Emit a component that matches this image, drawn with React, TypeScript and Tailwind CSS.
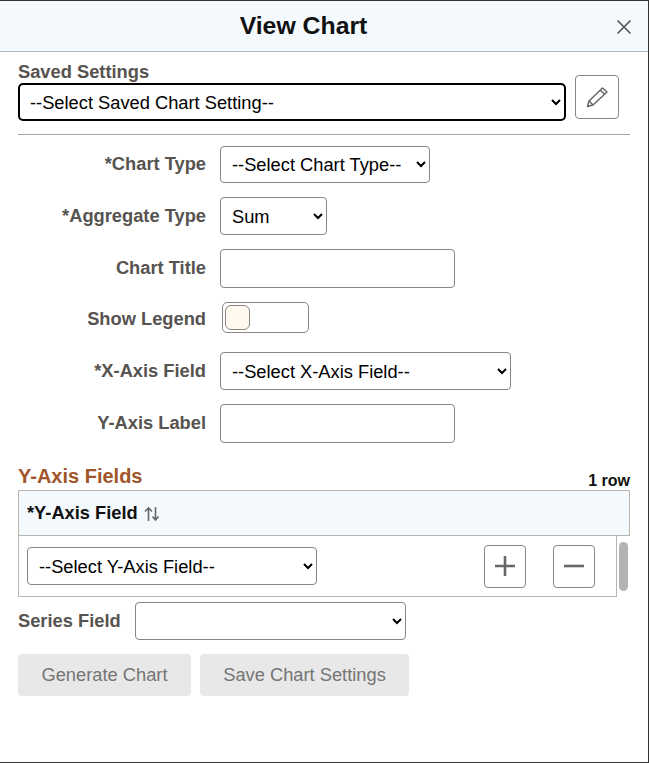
export default function App() {
  const selectClass =
    "h-[38px] bg-white border border-[#8a8580] rounded-[4px] pl-[7px] text-[18.3px] text-black";
  const labelClass = "w-[188px] text-right text-[#565350] font-bold text-[18.3px] leading-5";

  return (
    <div className="w-[649px] h-[763px] bg-white border-t border-r border-b border-[#333] flex flex-col font-['Liberation_Sans',Arial,sans-serif] overflow-hidden">
      {/* Header */}
      <div className="h-[51px] shrink-0 bg-[#f4f9fd] border-b border-[#b5b5b5] relative flex items-center justify-center pr-[41px]">
        <h1 className="text-[24.8px] font-bold text-[#111]">View Chart</h1>
        <button className="absolute right-[16px] top-[18px] text-[#555]">
          <svg width="16" height="16" viewBox="0 0 16 16" fill="none" stroke="currentColor" strokeWidth="1.6">
            <path d="M1.5 1.5 14.5 14.5M14.5 1.5 1.5 14.5" />
          </svg>
        </button>
      </div>

      <div className="flex flex-col pl-[18px] pr-[18px]">
        {/* Saved settings */}
        <div className="flex items-end gap-[9px] mt-[10px]">
          <div className="flex flex-col w-[548px]">
            <label className="text-[#565350] font-bold text-[18.3px] leading-5 mb-[1px]">Saved Settings</label>
            <select className="h-[38px] bg-white border-2 border-black rounded-[5px] pl-[6px] text-[18.3px] text-black">
              <option>--Select Saved Chart Setting--</option>
            </select>
          </div>
          <button className="w-[44px] h-[44px] mb-[2px] border border-[#8a8580] rounded-[4px] flex items-center justify-center text-[#666]">
            <svg width="24" height="24" viewBox="0 0 24 24" fill="none" stroke="currentColor" strokeWidth="1.5" strokeLinejoin="round">
              <path d="M2.5 21.5 4 16 17.5 3 22 7 8 20Z" />
              <path d="M15.5 5.5 20 9.5M4 16 8 20" />
            </svg>
          </button>
        </div>
        <div className="h-px bg-[#a8a8a8] mt-[13px] mb-[11px]" />

        {/* Form rows */}
        <div className="flex items-center gap-[14px]">
          <label className={labelClass + " mb-[2px]"}>*Chart Type</label>
          <select className={selectClass + " w-[210px] !h-[37px]"}>
            <option>--Select Chart Type--</option>
          </select>
        </div>
        <div className="flex items-center gap-[14px] mt-[14px]">
          <label className={labelClass}>*Aggregate Type</label>
          <select className={selectClass + " w-[107px]"}>
            <option>Sum</option>
          </select>
        </div>
        <div className="flex items-center gap-[14px] mt-[14px]">
          <label className={labelClass + " mb-[1px]"}>Chart Title</label>
          <input className="w-[235px] h-[39px] border border-[#8a8580] rounded-[4px]" />
        </div>
        <div className="flex items-center gap-[14px] mt-[14px]">
          <label className={labelClass + " mt-[2px]"}>Show Legend</label>
          <div className="ml-[2px] w-[87px] h-[31px] border border-[#8a8580] rounded-[5px] flex items-center pl-[2px]">
            <div className="w-[25px] h-[25px] bg-[#fff8ee] border border-[#8a8580] rounded-[6px]" />
          </div>
        </div>
        <div className="flex items-center gap-[14px] mt-[19px]">
          <label className={labelClass}>*X-Axis Field</label>
          <select className={selectClass + " w-[291px]"}>
            <option>--Select X-Axis Field--</option>
          </select>
        </div>
        <div className="flex items-center gap-[14px] mt-[14px]">
          <label className={labelClass + " mb-[2px]"}>Y-Axis Label</label>
          <input className="w-[235px] h-[39px] border border-[#8a8580] rounded-[4px]" />
        </div>

        {/* Y-Axis grid */}
        <div className="flex items-end justify-between mt-[22px] h-[25px]">
          <h2 className="text-[#a0562a] font-bold text-[20px] leading-[24px] mb-[2px]">Y-Axis Fields</h2>
          <span className="text-[16px] font-bold text-[#111] leading-[18px]">1 row</span>
        </div>
        <div className="h-[46px] bg-[#f4f9fd] border border-[#b8b5b0] flex items-center pl-2 gap-[6px]">
          <span className="font-bold text-[18.3px] text-[#111]">*Y-Axis Field</span>
          <svg width="17" height="16" viewBox="0 0 17 16" fill="none" stroke="#666" strokeWidth="1.6" className="mt-[2px]">
            <path d="M4.5 15V2M1 5.5l3.5-3.5L8 5.5M11.5 1v13M8.5 10.5l3 3.5 3-3.5" />
          </svg>
        </div>
        <div className="flex">
          <div className="w-[599px] h-[61px] border-x border-b border-[#b8b5b0] flex items-center pl-2 pr-[21px]">
            <select className={selectClass + " w-[290px]"}>
              <option>--Select Y-Axis Field--</option>
            </select>
            <button className="ml-auto w-[42px] h-[43px] border border-[#8a8580] rounded-[4px] flex items-center justify-center text-[#666]">
              <svg width="22" height="22" viewBox="0 0 22 22" fill="none" stroke="currentColor" strokeWidth="2.6">
                <path d="M11 1v20M1 11h20" />
              </svg>
            </button>
            <button className="ml-[27px] w-[42px] h-[43px] border border-[#8a8580] rounded-[4px] flex items-center justify-center text-[#666]">
              <svg width="22" height="22" viewBox="0 0 22 22" fill="none" stroke="currentColor" strokeWidth="2.6">
                <path d="M1 11h20" />
              </svg>
            </button>
          </div>
          <div className="ml-[2px] mt-[6px] w-[9px] h-[49px] rounded-[5px] bg-[#b3b3b3]" />
        </div>

        <div className="flex items-center mt-[5px]">
          <label className="w-[117px] text-[#565350] font-bold text-[18.3px] leading-5">Series Field</label>
          <select className={selectClass + " w-[271px]"}>
            <option></option>
          </select>
        </div>

        <div className="flex gap-[9px] mt-[14px]">
          <button className="w-[173px] h-[42px] bg-[#e8e8e8] rounded-[4px] text-[#757575] text-[18.3px]">Generate Chart</button>
          <button className="w-[209px] h-[42px] bg-[#e8e8e8] rounded-[4px] text-[#757575] text-[18.3px]">Save Chart Settings</button>
        </div>
      </div>
    </div>
  );
}
